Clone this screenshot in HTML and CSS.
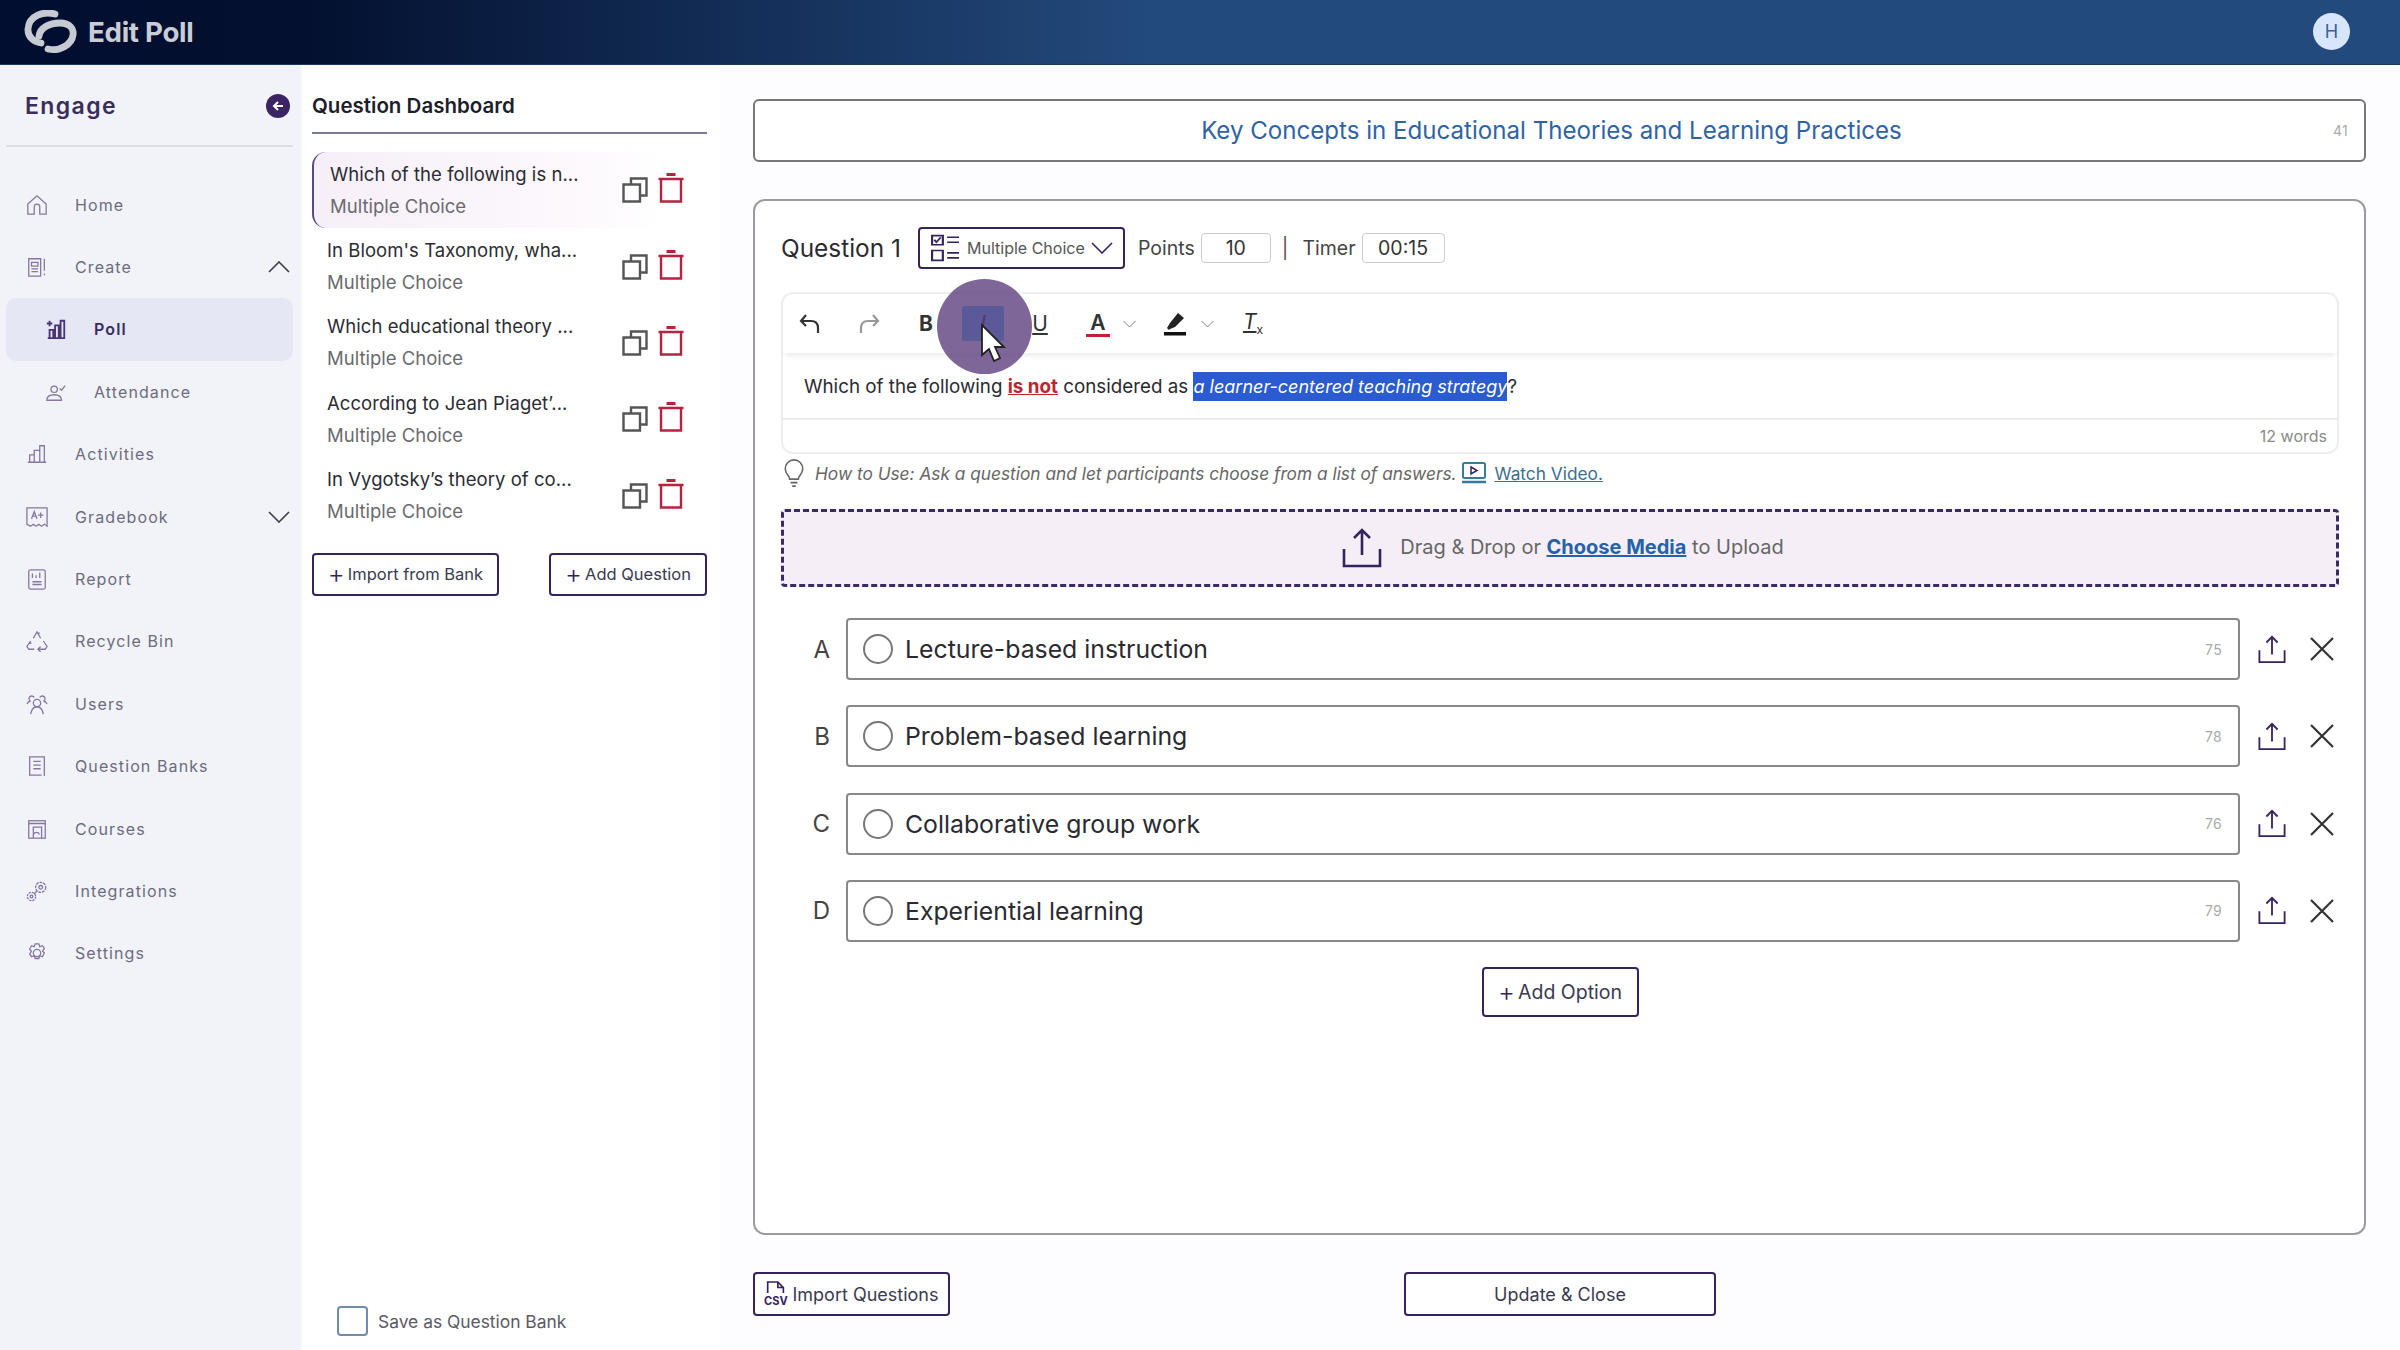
FILE: index.html
```html
<!DOCTYPE html>
<html lang="en">
<head>
<meta charset="utf-8">
<title>Edit Poll</title>
<link rel="stylesheet" href="styles.css">
</head>
<body>
<svg class="defs" width="0" height="0" aria-hidden="true">
  <symbol id="i-copy" viewBox="0 0 26 26"><path d="M9 7.500V1.500h15.500v17H18M1.500 7.500h16.500v17H1.500z" fill="none" stroke="#555" stroke-width="2.400"/></symbol>
  <symbol id="i-trash" viewBox="0 0 26 30"><path d="M3 6.500V28.500H23V6.500M0.500 6H25.500" fill="none" stroke="#b5233f" stroke-width="2.400"/><path d="M8.500 1.500h9" stroke="#b5233f" stroke-width="3"/></symbol>
  <symbol id="i-up" viewBox="0 0 40 40"><path d="M20 27V3M12 10l8-8 8 8M2 21v17h36V21" fill="none" stroke="#35235f" stroke-width="2.600"/></symbol>
  <symbol id="i-x" viewBox="0 0 24 24"><path d="M1 1l22 22M23 1L1 23" fill="none" stroke="#333" stroke-width="2.200"/></symbol>
  <symbol id="i-chev" viewBox="0 0 22 12"><path d="M1 1l10 10L21 1" fill="none" stroke="currentColor" stroke-width="1.600"/></symbol>
</svg>

<div class="app">
  <header class="topbar">
    <div class="brand">
      <svg class="logo" viewBox="0 0 54 44" aria-hidden="true">
        <path d="M31 4C20 1 5 5 4 19c-.5 8 6 13 13 14" fill="none" stroke="#c6cad3" stroke-width="6.800" stroke-linecap="round"/>
        <path d="M15 26c1-8 10-13 21-13 10 0 14 6 13 12-1 9-13 17-25 14" fill="none" stroke="#c6cad3" stroke-width="6.800" stroke-linecap="round"/>
      </svg>
      <span class="brand-name">Edit Poll</span>
    </div>
    <div class="avatar">H</div>
  </header>

  <div class="layout">
    <aside class="side">
      <div class="side-head">
        <span class="engage">Engage</span>
        <span class="back"><svg viewBox="0 0 24 24" width="24" height="24" aria-hidden="true"><circle cx="12" cy="12" r="12" fill="#3a2466"/><path d="M17 12H8M12 8l-4 4 4 4" fill="none" stroke="#fff" stroke-width="2"/></svg></span>
      </div>
      <nav class="nav">
        <a class="nav-item"><svg class="nav-ic" viewBox="0 0 24 24"><path d="M2 11L12 2l10 9v11h-7v-8a3 3 0 0 0-6 0v8H2z"/></svg>Home</a>
        <a class="nav-item"><svg class="nav-ic" viewBox="0 0 24 24"><path d="M3 3h13v19H3zM6 7h7v4H6zM6 14h7M6 17h7M20 3v13M20 19v2"/></svg>Create<svg class="caret up"><use href="#i-chev"/></svg></a>
        <a class="nav-item sub active"><svg class="nav-ic" viewBox="0 0 24 24"><path d="M3 22h19M5 22v-9h4v9M11 22V8h4v14M17 22V3h4v19M2 6h6M5 3v6"/></svg>Poll</a>
        <a class="nav-item sub"><svg class="nav-ic" viewBox="0 0 24 24"><circle cx="10" cy="9" r="3.500"/><path d="M2 21c0-5 4-6 8-6s8 1 8 6zM16 8l2 2 4-5"/></svg>Attendance</a>
        <a class="nav-item"><svg class="nav-ic" viewBox="0 0 24 24"><path d="M2 21h20M4 21v-8h5v8M9 21V8h6v13M15 21V3h5v18"/></svg>Activities</a>
        <a class="nav-item"><svg class="nav-ic" viewBox="0 0 24 24"><path d="M1 2h22v20l-3-2-3 2-3-2-3 2-3-2-3 2-4-2zM6 14l3-8 3 8M7 11h4M16 7v6M13 10h6"/></svg>Gradebook<svg class="caret"><use href="#i-chev"/></svg></a>
        <a class="nav-item"><svg class="nav-ic" viewBox="0 0 24 24"><rect x="3" y="2" width="18" height="21" rx="2"/><path d="M7 6v5M11 8v3M15 5v6M7 15h10M7 18h10"/></svg>Report</a>
        <a class="nav-item"><svg class="nav-ic" viewBox="0 0 24 24"><path d="M8 9l4-7 4 7M13 4l2-1M5 12l-4 6 2 3h6M3 15l3-1M19 12l4 6-2 3h-7M16 18l-3 3 3 3"/></svg>Recycle Bin</a>
        <a class="nav-item"><svg class="nav-ic" viewBox="0 0 24 24"><circle cx="12" cy="11" r="4"/><path d="M5 23c1-5 3-8 7-8s6 3 7 8M5 9a3 3 0 1 1 4-4M19 9a3 3 0 1 0-4-4M1 12c1-2 2-3 4-3M23 12c-1-2-2-3-4-3"/></svg>Users</a>
        <a class="nav-item"><svg class="nav-ic" viewBox="0 0 24 24"><path d="M20 20V2H4v20h13M8 7h8M8 11h8M8 15h8M20 20v3"/></svg>Question Banks</a>
        <a class="nav-item"><svg class="nav-ic" viewBox="0 0 24 24"><rect x="3" y="3" width="18" height="19"/><path d="M3 6h18M8 22V10h9v12M8 18c2-3 5-3 7 0"/></svg>Courses</a>
        <a class="nav-item"><svg class="nav-ic" viewBox="0 0 24 24"><circle cx="16" cy="8" r="5.500" stroke-dasharray="3 1"/><circle cx="16" cy="8" r="2"/><circle cx="6" cy="18" r="4.500" stroke-dasharray="2.500 1"/><circle cx="6" cy="18" r="1.500"/><path d="M12 12l-3 3"/></svg>Integrations</a>
        <a class="nav-item"><svg class="nav-ic" viewBox="0 0 24 24"><circle cx="12" cy="12" r="4"/><path d="M10 2h4l1 3 3-1 2 3-2 3 2 2-2 4-3-1-1 3-4 0-1-3-3 1-2-3 2-3-2-2 2-4 3 1z"/></svg>Settings</a>
      </nav>
    </aside>

    <section class="dash">
      <h2 class="dash-title">Question Dashboard</h2>
      <ul class="q-list">
        <li class="q-item current"><div class="q-text"><b>Which of the following is n...</b><span>Multiple Choice</span></div><svg class="ic-copy"><use href="#i-copy"/></svg><svg class="ic-trash"><use href="#i-trash"/></svg></li>
        <li class="q-item"><div class="q-text"><b>In Bloom's Taxonomy, wha...</b><span>Multiple Choice</span></div><svg class="ic-copy"><use href="#i-copy"/></svg><svg class="ic-trash"><use href="#i-trash"/></svg></li>
        <li class="q-item"><div class="q-text"><b>Which educational theory ...</b><span>Multiple Choice</span></div><svg class="ic-copy"><use href="#i-copy"/></svg><svg class="ic-trash"><use href="#i-trash"/></svg></li>
        <li class="q-item"><div class="q-text"><b>According to Jean Piaget’...</b><span>Multiple Choice</span></div><svg class="ic-copy"><use href="#i-copy"/></svg><svg class="ic-trash"><use href="#i-trash"/></svg></li>
        <li class="q-item"><div class="q-text"><b>In Vygotsky’s theory of co...</b><span>Multiple Choice</span></div><svg class="ic-copy"><use href="#i-copy"/></svg><svg class="ic-trash"><use href="#i-trash"/></svg></li>
      </ul>
      <div class="dash-btns">
        <button class="btn btn-bank"><span class="plus">+</span>Import from Bank</button>
        <button class="btn btn-add"><span class="plus">+</span>Add Question</button>
      </div>
      <label class="save-bank"><span class="check"></span>Save as Question Bank</label>
    </section>

    <main class="main">
      <div class="poll-title"><span class="poll-title-text">Key Concepts in Educational Theories and Learning Practices</span><span class="count">41</span></div>

      <div class="card">
        <div class="q-head">
          <span class="q-num">Question 1</span>
          <div class="type-select">
            <svg class="type-ic" viewBox="0 0 26 34" preserveAspectRatio="none" aria-hidden="true"><path d="M1 2h10v11H1zM1 20h10v12H1zM15 4h11M15 10h11M15 23h11M15 29h11" fill="none" stroke="#35235f" stroke-width="2"/><path d="M3 7l2 3 4-6" fill="none" stroke="#35235f" stroke-width="1.800"/></svg>
            <span>Multiple Choice</span>
            <svg class="type-chev"><use href="#i-chev"/></svg>
          </div>
          <span class="lbl lbl-points">Points</span><span class="field f-points">10</span>
          <span class="pipe">|</span>
          <span class="lbl">Timer</span><span class="field f-timer">00:15</span>
        </div>

        <div class="editor">
          <div class="toolbar">
            <svg class="tb tb-undo" viewBox="0 0 24 24"><path d="M8 3L3 9l5 5M3 9h10c5 0 7 3 7 7v5" fill="none" stroke="#333" stroke-width="2.200"/></svg>
            <svg class="tb tb-redo" viewBox="0 0 24 24"><path d="M16 3l5 6-5 5M21 9H11c-5 0-7 3-7 7v5" fill="none" stroke="#999" stroke-width="2.200"/></svg>
            <span class="tb-t tb-b">B</span>
            <span class="tb-t tb-i">I</span>
            <span class="tb-t tb-u">U</span>
            <span class="tb-t tb-a">A</span>
            <svg class="tb-chev tb-chev-a"><use href="#i-chev"/></svg>
            <svg class="tb tb-hl" viewBox="0 0 24 24"><path d="M4 16l3-5L15 1l6 5-9 9-5 2-1 1z" fill="#222"/><rect x="1" y="20" width="22" height="3.500" fill="#111"/></svg>
            <svg class="tb-chev tb-chev-h"><use href="#i-chev"/></svg>
            <span class="tb-t tb-clear">T<sub>x</sub></span>
          </div>
          <p class="editor-text">Which of the following <strong class="em-red">is not</strong> considered as <em class="sel">a learner-centered teaching strategy</em>?</p>
          <div class="word-count">12 words</div>
        </div>

        <div class="hint">
          <svg class="bulb" viewBox="0 0 24 32" aria-hidden="true"><path d="M7 23c0-4-5-6-5-12a10 10 0 0 1 20 0c0 6-5 8-5 12zM8 27h8M10 31h4" fill="none" stroke="#666" stroke-width="1.800"/></svg>
          <em>How to Use: Ask a question and let participants choose from a list of answers.</em>
          <svg class="vid" viewBox="0 0 24 22" aria-hidden="true"><rect x="1" y="1" width="22" height="15" rx="1.500" fill="none" stroke="#3a7a9a" stroke-width="2"/><path d="M9 5l6 3.500-6 3.500z" fill="none" stroke="#35235f" stroke-width="1.500"/><path d="M0 20h24" stroke="#3a7a9a" stroke-width="2.500"/></svg>
          <a class="watch">Watch Video.</a>
        </div>

        <div class="drop">
          <svg class="drop-ic"><use href="#i-up"/></svg>
          <span class="drop-t">Drag &amp; Drop or <a class="choose">Choose Media</a> to Upload</span>
        </div>

        <div class="options">
          <div class="opt"><span class="opt-l">A</span><div class="opt-box"><span class="radio"></span><span class="opt-t">Lecture-based instruction</span><span class="count">75</span></div><svg class="opt-up"><use href="#i-up"/></svg><svg class="opt-x"><use href="#i-x"/></svg></div>
          <div class="opt"><span class="opt-l">B</span><div class="opt-box"><span class="radio"></span><span class="opt-t">Problem-based learning</span><span class="count">78</span></div><svg class="opt-up"><use href="#i-up"/></svg><svg class="opt-x"><use href="#i-x"/></svg></div>
          <div class="opt"><span class="opt-l">C</span><div class="opt-box"><span class="radio"></span><span class="opt-t">Collaborative group work</span><span class="count">76</span></div><svg class="opt-up"><use href="#i-up"/></svg><svg class="opt-x"><use href="#i-x"/></svg></div>
          <div class="opt"><span class="opt-l">D</span><div class="opt-box"><span class="radio"></span><span class="opt-t">Experiential learning</span><span class="count">79</span></div><svg class="opt-up"><use href="#i-up"/></svg><svg class="opt-x"><use href="#i-x"/></svg></div>
        </div>
        <button class="btn btn-opt"><span class="plus">+</span>Add Option</button>
      </div>

      <div class="foot">
        <button class="btn btn-import">
          <svg class="csv" viewBox="0 0 26 30" aria-hidden="true"><path d="M4 14V2h11l6 6v6M15 2v6h6" fill="none" stroke="#35235f" stroke-width="1.800"/><text x="0" y="27" font-size="12" font-weight="700" fill="#35235f" font-family="Inter, sans-serif">CSV</text></svg>
          Import Questions</button>
        <button class="btn btn-update">Update &amp; Close</button>
      </div>
    </main>
  </div>

  <div class="spot" aria-hidden="true">
    <svg class="cursor" viewBox="0 0 26 40"><path d="M2 2v30l7-6 5 12 6-3-5-11h9z" fill="#fff" stroke="#222" stroke-width="1.800"/></svg>
  </div>
</div>
</body>
</html>
```

FILE: styles.css
```css
* { box-sizing: border-box; }
html, body { margin: 0; padding: 0; }
body { font-family: Inter, "Liberation Sans", sans-serif; background: #fff; color: #222; }
.defs { position: absolute; }
button { font-family: inherit; background: #fff; cursor: pointer; }
a { color: inherit; }
ul { list-style: none; margin: 0; padding: 0; }
h2, p { margin: 0; }

.app { position: relative; width: 2400px; height: 1350px; overflow: hidden; display: flex; flex-direction: column; }

/* top bar */
.topbar { height: 65px; flex: none; display: flex; align-items: center; justify-content: space-between; padding: 0 50px 1px 24px; background: linear-gradient(90deg, #020e30 0, #03102f 300px, #234a7c 1150px, #234a7c 100%); border-bottom: 1px solid #1a3a62; }
.brand { display: flex; align-items: center; gap: 10px; }
.logo { width: 54px; height: 44px; }
.brand-name { font-size: 27.700px; font-weight: 700; color: #c9cdd6; letter-spacing: -0.3px; }
.avatar { width: 37px; height: 37px; border-radius: 50%; background: #d8e6fb; color: #3b5f96; font-size: 18px; display: flex; align-items: center; justify-content: center; }

.layout { flex: 1; display: flex; min-height: 0; }

/* sidebar */
.side { width: 301px; flex: none; background: #f1f3f9; padding: 0 8px 0 6px; box-shadow: 1px 0 2px rgba(0,0,0,.04); position: relative; }
.side-head { height: 82px; display: flex; align-items: center; justify-content: space-between; padding: 2px 0 0 19px; border-bottom: 2px solid #dcdde5; }
.engage { font-size: 23px; font-weight: 600; color: #3a2d5e; letter-spacing: 1.400px; }
.back { width: 24px; height: 24px; margin-right: 3px; }
.nav { display: flex; flex-direction: column; padding-top: 26.500px; }
.nav-item { height: 62.400px; display: flex; align-items: center; padding-left: 20px; font-size: 16px; letter-spacing: 1.100px; color: #6c6c7e; border-radius: 10px; }
.nav-ic { width: 22px; height: 22px; margin-right: 27px; fill: none; stroke: #85779f; stroke-width: 1.400; flex: none; }
.nav-item.sub { padding-left: 39px; }
.nav-item.active { background: #e5e7f4; color: #3a2d5e; font-weight: 600; }
.nav-item.active .nav-ic { stroke: #4a3578; stroke-width: 2; }
.caret { width: 22px; height: 12px; margin-left: auto; margin-right: 3px; color: #3b3b4b; }
.caret.up { transform: scaleY(-1); }

/* dashboard column */
.dash { width: 419px; flex: none; padding: 0 13px 0 11px; display: flex; flex-direction: column; }
.dash-title { height: 69px; padding-top: 29px; font-size: 20.500px; font-weight: 600; line-height: 24px; color: #1d1d2b; border-bottom: 2px solid #787a9c; margin-bottom: 18px; }
.q-list { display: flex; flex-direction: column; }
.q-item { height: 76.400px; display: flex; align-items: center; padding-left: 15px; }
.q-item.current { padding-left: 16px; border-left: 2px solid #5c4a88; border-radius: 14px 0 0 14px; background: linear-gradient(90deg, #f7eff8 0, #fdf9fd 70%, #fff 88%); }
.q-text { width: 295px; display: flex; flex-direction: column; gap: 13px; font-size: 18.500px; line-height: 19px; }
.q-item.current .q-text { width: 292px; }
.q-text b { font-weight: 400; color: #2b2b33; letter-spacing: .05px; }
.q-text span { color: #6a6a6e; }
.ic-copy { width: 26px; height: 26px; }
.ic-trash { width: 26px; height: 30px; margin-left: 10px; margin-top: -4px; }
.dash-btns { display: flex; justify-content: space-between; margin-top: 19px; }
.btn { height: 43px; border: 2.500px solid #35235f; border-radius: 4px; color: #3a3a50; font-size: 16.500px; padding: 0; display: flex; align-items: center; justify-content: center; }
.plus { font-size: 26px; font-weight: 300; line-height: 1; margin-right: 3px; color: #35235f; }
.btn-bank { width: 187px; }
.btn-add { width: 158px; }
.save-bank { margin-top: auto; margin-bottom: 14px; margin-left: 25px; display: flex; align-items: center; gap: 10px; font-size: 17.400px; color: #5a5a66; }
.check { width: 31px; height: 30px; border: 2px solid #6f8ca8; border-radius: 4px; background: #fff; }

/* main */
.main { flex: 1; min-width: 0; padding: 34px 34px 0 33px; background: #fdfdff; display: flex; flex-direction: column; }
.poll-title { height: 63px; flex: none; border: 2px solid #777; border-radius: 6px; background: #fff; display: flex; align-items: center; padding: 0 16px 0 15px; }
.poll-title-text { flex: 1; text-align: center; font-size: 24.100px; color: #2f63a6; }
.count { font-size: 14px; color: #aaa; letter-spacing: .3px; }

.card { height: 1036px; flex: none; margin-top: 37px; border: 2px solid #9b9b9f; border-radius: 12px; background: #fff; padding: 26px 25px 0 26px; display: flex; flex-direction: column; }
.q-head { height: 42px; display: flex; align-items: center; flex: none; }
.q-num { font-size: 24.400px; color: #2a2a30; width: 137px; }
.type-select { width: 207px; height: 42px; border: 2.500px solid #35235f; border-radius: 4px; display: flex; align-items: center; padding-left: 11px; font-size: 16px; color: #555; }
.type-ic { width: 28px; height: 28px; margin-right: 8px; }
.type-chev { width: 22px; height: 12px; margin-left: 6px; color: #35235f; }
.lbl { font-size: 19.500px; color: #444; }
.lbl-points { margin-left: 13px; }
.field { height: 30px; border: 1.500px solid #ccc; border-radius: 4px; display: flex; align-items: center; justify-content: center; font-size: 19.500px; color: #333; margin-left: 6px; }
.f-points { width: 70px; }
.f-timer { width: 83px; }
.pipe { font-size: 20px; color: #555; margin: 0 14px 0 11px; }

.editor { height: 162px; flex: none; margin-top: 23px; border: 2px solid #eee; border-radius: 12px; display: flex; flex-direction: column; }
.toolbar { height: 59px; flex: none; box-shadow: 0 4px 6px -2px rgba(0,0,0,.09); display: flex; align-items: center; position: relative; }
.tb { width: 24px; height: 24px; flex: none; }
.tb-undo { margin-left: 15px; }
.tb-redo { margin-left: 35px; }
.tb-t { font-size: 21px; color: #333; width: 24px; text-align: center; flex: none; }
.tb-b { margin-left: 33px; font-weight: 700; }
.tb-i { margin-left: 24px; width: 42px; height: 35px; line-height: 35px; font-style: italic; background: #6ec8ff; color: #8a1040; border-radius: 2px; }
.tb-u { margin-left: 24px; text-decoration: underline; }
.tb-a { margin-left: 34px; font-weight: 600; border-bottom: 3px solid #c0232f; height: 27px; line-height: 25px; }
.tb-chev { width: 13px; height: 8px; color: #777; flex: none; }
.tb-chev-a { margin-left: 13px; }
.tb-hl { margin-left: 27px; }
.tb-chev-h { margin-left: 14px; }
.tb-clear { margin-left: 27px; font-style: italic; text-decoration: underline; font-size: 21px; }
.tb-clear sub { font-size: 12px; font-style: normal; }
.editor-text { height: 67px; flex: none; padding: 0 0 0 21px; font-size: 18.800px; line-height: 68px; color: #2a2a30; border-bottom: 2px solid #ececec; white-space: nowrap; }
.em-red { color: #c0232f; text-decoration: underline; font-weight: 700; }
.sel { background: #2a5bd0; color: #fff; padding: 4px 0; font-size: 18px; }
.word-count { flex: 1; display: flex; align-items: center; justify-content: flex-end; padding-right: 10px; font-size: 16px; color: #8a8a8a; }

.hint { height: 40px; padding-bottom: 2px; flex: none; margin-left: 2px; display: flex; align-items: center; font-size: 17.300px; color: #666; white-space: nowrap; }
.bulb { width: 22px; height: 28px; margin-right: 10px; }
.vid { width: 24px; height: 22px; margin: 0 8px 0 6px; }
.watch { color: #3a6f92; text-decoration: underline; }

.drop { height: 78px; flex: none; margin-top: 15px; padding-left: 6px; border: 3px dashed #3a2a66; border-radius: 4px; background: #f6eef6; display: flex; align-items: center; justify-content: center; gap: 18px; font-size: 20px; color: #666; }
.drop-ic { width: 40px; height: 40px; }
.drop-t { padding-bottom: 2px; }
.choose { color: #2562a8; font-weight: 700; text-decoration: underline; }

.options { display: flex; flex-direction: column; gap: 25.300px; margin-top: 31px; flex: none; }
.opt { height: 62px; display: flex; align-items: center; }
.opt-l { width: 65px; padding-right: 16px; text-align: right; font-size: 24px; color: #444; flex: none; }
.opt-box { width: 1394px; height: 62px; border: 2px solid #888; border-radius: 4px; background: #fff; display: flex; align-items: center; padding: 0 16px 0 15px; font-size: 24.800px; color: #2a2a30; }
.radio { width: 30px; height: 30px; border: 2px solid #777; border-radius: 50%; flex: none; margin-right: 12px; }
.opt-t { flex: 1; }
.opt-up { width: 28px; height: 29px; margin-left: 18px; }
.opt-x { width: 24px; height: 24px; margin-left: 24px; }

.btn-opt { width: 157px; height: 50px; align-self: center; margin-top: 25px; font-size: 19.500px; margin-left: 0; }

.foot { display: flex; align-items: center; margin-top: 37px; }
.btn-import { width: 197px; height: 44px; font-size: 18px; gap: 4px; }
.csv { width: 24px; height: 28px; }
.btn-update { width: 312px; height: 44px; font-size: 18px; margin-left: 454px; }

/* recording spotlight over the toolbar */
.spot { position: absolute; left: 937px; top: 279px; width: 95px; height: 95px; border-radius: 50%; background: rgba(85, 55, 120, .76); }
.cursor { position: absolute; left: 43px; top: 44px; width: 26px; height: 40px; }
```
